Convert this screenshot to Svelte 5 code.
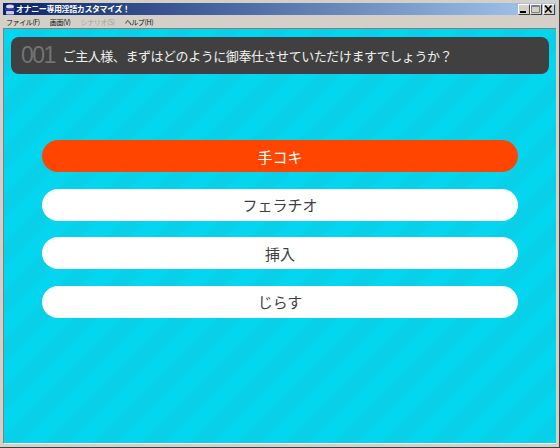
<script lang="ts">
  const menus = [
    { label: 'ファイル(F)', off: false },
    { label: '画面(V)', off: false },
    { label: 'シナリオ(S)', off: true },
    { label: 'ヘルプ(H)', off: false }
  ];
  const choices = ['手コキ', 'フェラチオ', '挿入', 'じらす'];
  let selected = $state(0);
</script>

<div class="window">
  <div class="titlebar">
    <svg class="appicon" width="10" height="11" viewBox="0 0 10 11">
      <ellipse cx="5" cy="2.5" rx="4" ry="2" fill="#d8d8f0" />
      <rect x="0" y="4.5" width="10" height="2" fill="#3a3ab0" />
      <rect x="1" y="7" width="8" height="3.5" rx="1" fill="#c8c8e8" />
    </svg>
    <span class="title">オナニー専用淫語カスタマイズ！</span>
    <div class="controls">
      <button class="ctl" aria-label="minimize"><svg width="10" height="9" viewBox="0 0 10 9"><rect x="1" y="6" width="6" height="2" fill="#000" /></svg></button>
      <button class="ctl off" aria-label="maximize"><svg width="10" height="9" viewBox="0 0 10 9"><path d="M0.5 0.5h8v7h-8z M0.5 1.5h8" fill="none" stroke="#808080" /></svg></button>
      <button class="ctl close" aria-label="close"><svg width="10" height="9" viewBox="0 0 10 9"><path d="M1 0.5l6.5 7M7.5 0.5l-6.5 7" stroke="#000" stroke-width="1.6" fill="none" /></svg></button>
    </div>
  </div>
  <div class="menubar">
    {#each menus as m}
      <span class="menu" class:off={m.off}>{m.label}</span>
    {/each}
  </div>
  <main class="stage">
    <header class="question">
      <span class="num">001</span>
      <span class="text">ご主人様、まずはどのように御奉仕させていただけますでしょうか？</span>
    </header>
    <div class="choices">
      {#each choices as c, i}
        <button class="choice" class:on={selected === i} onclick={() => (selected = i)}>{c}</button>
      {/each}
    </div>
  </main>
</div>

<style>
  :global(body) { margin: 0; background: #d4d0c8; }
  .window {
    width: 560px;
    height: 448px;
    box-sizing: border-box;
    padding: 3px;
    display: flex;
    flex-direction: column;
    background: #d4d0c8;
    border-right: 1px solid #404040;
    border-bottom: 1px solid #404040;
    font-family: "Noto Sans CJK JP", "Liberation Sans", sans-serif;
  }
  .titlebar {
    height: 12px;
    flex: none;
    display: flex;
    align-items: center;
    gap: 1px;
    background: linear-gradient(90deg, #0a246a, #a6caf0);
    padding-left: 2px;
  }
  .appicon { flex: none; }
  .title { color: #fff; font-size: 8px; font-weight: 700; letter-spacing: -0.4px; line-height: 12px; white-space: nowrap; }
  .controls { margin-left: auto; display: flex; padding-right: 1px; }
  .ctl {
    width: 12px;
    height: 11px;
    padding: 0;
    display: flex;
    align-items: center;
    justify-content: center;
    background: #d4d0c8;
    border: 1px solid;
    border-color: #fff #404040 #404040 #fff;
  }
  .ctl.close { margin-left: 1px; }
  .menubar {
    height: 13px;
    flex: none;
    display: flex;
    align-items: center;
    gap: 10px;
    padding-left: 3px;
    font-size: 7px;
    letter-spacing: -0.4px;
    color: #111;
    border-bottom: 1px solid #808080;
  }
  .menu.off { color: #a0a0a0; }
  .stage {
    flex: 1;
    min-height: 0;
    box-sizing: border-box;
    padding: 8px 7px 0 7px;
    background: repeating-linear-gradient(135deg, #03d6ee 0 13px, #09d0e9 18px 29px, #03d6ee 34px);
    border-left: 1px solid #808080;
    border-bottom: 1px solid #fff;
    display: flex;
    flex-direction: column;
  }
  .question {
    height: 37px;
    flex: none;
    display: flex;
    align-items: center;
    gap: 8px;
    padding-left: 10px;
    background: #404040;
    border-radius: 8px;
  }
  .num { font-family: "Liberation Sans", sans-serif; font-size: 23px; color: #737373; letter-spacing: -1.6px; }
  .text { font-size: 13px; letter-spacing: -0.44px; color: #f0f0f0; white-space: nowrap; }
  .choices {
    margin-top: 66px;
    padding: 0 31px;
    display: flex;
    flex-direction: column;
    gap: 16.5px;
  }
  .choice {
    height: 32px;
    padding: 0;
    border: none;
    border-radius: 16px;
    background: #fff;
    color: #404040;
    font: inherit;
    font-size: 15px;
  }
  .choice.on { background: #ff4500; color: #fff; }
</style>
